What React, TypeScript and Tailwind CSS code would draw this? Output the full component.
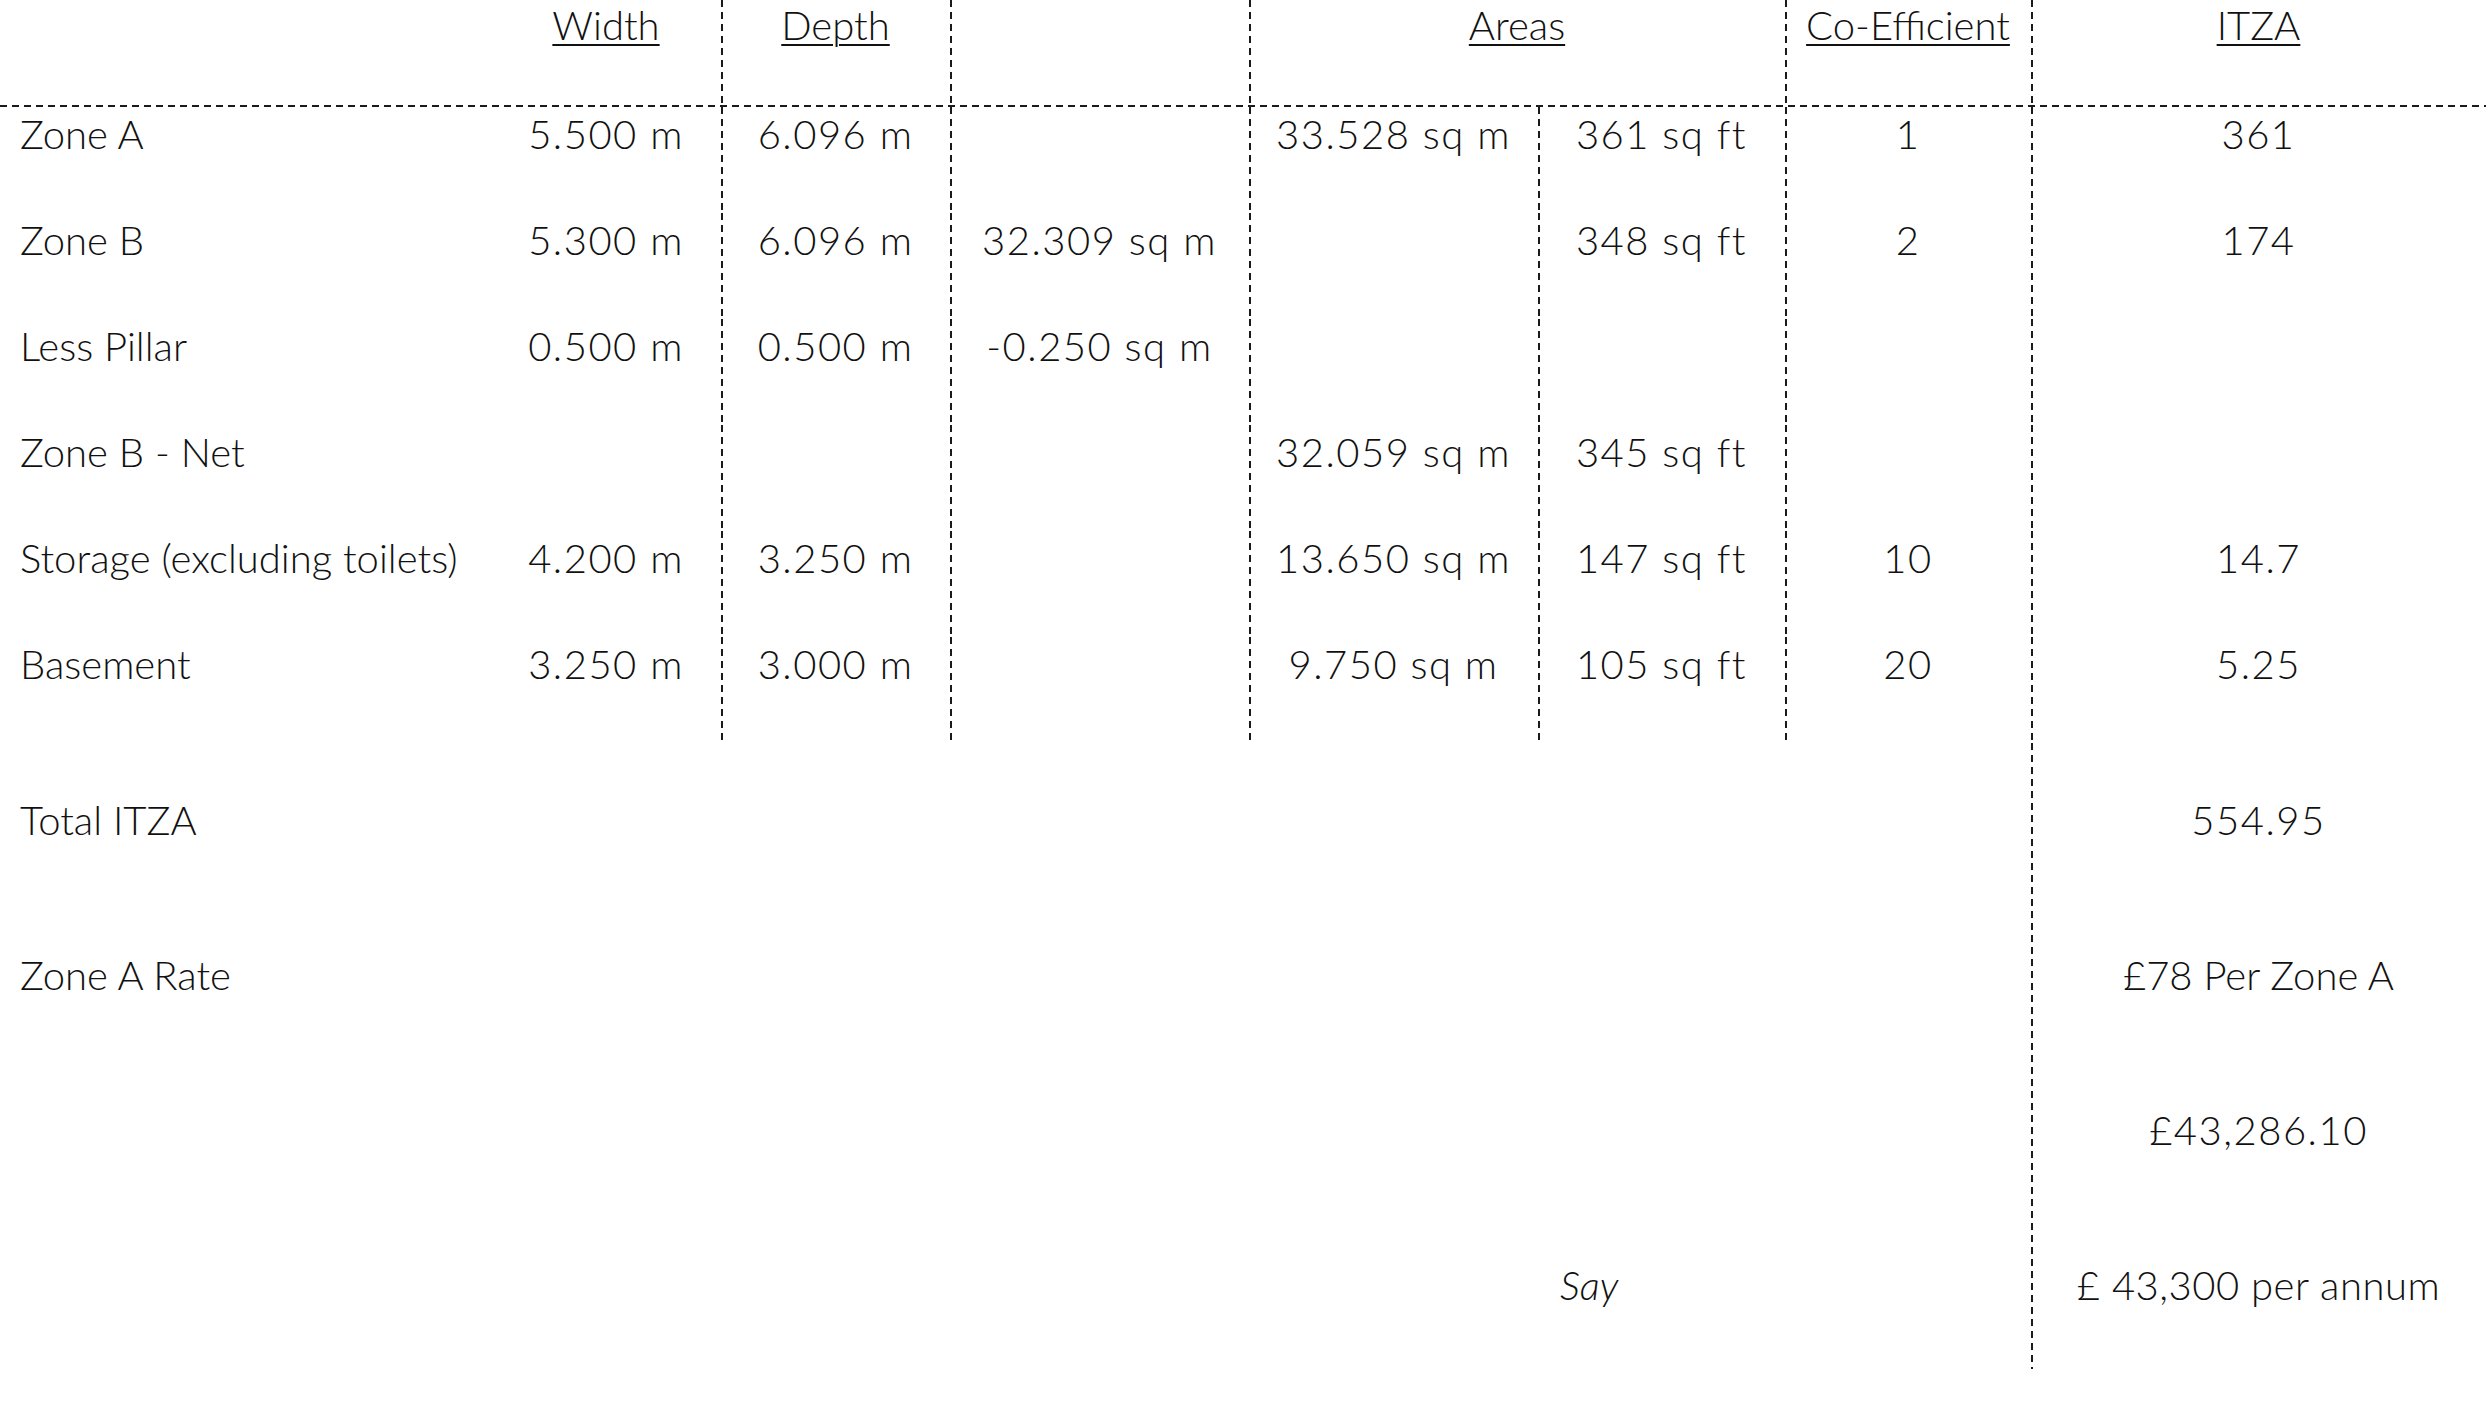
import clsx from "clsx";

type Row = {
  label: string;
  values: string[]; // width, depth, area, area sq m, sq ft, co-efficient, itza
};

const rows: Row[] = [
  { label: "Zone A", values: ["5.500 m", "6.096 m", "", "33.528 sq m", "361 sq ft", "1", "361"] },
  { label: "Zone B", values: ["5.300 m", "6.096 m", "32.309 sq m", "", "348 sq ft", "2", "174"] },
  { label: "Less Pillar", values: ["0.500 m", "0.500 m", "-0.250 sq m", "", "", "", ""] },
  { label: "Zone B - Net", values: ["", "", "", "32.059 sq m", "345 sq ft", "", ""] },
  { label: "Storage (excluding toilets)", values: ["4.200 m", "3.250 m", "", "13.650 sq m", "147 sq ft", "10", "14.7"] },
  { label: "Basement", values: ["3.250 m", "3.000 m", "", "9.750 sq m", "105 sq ft", "20", "5.25"] },
];

// which value columns carry a dashed divider on their left
const dividers = [false, true, true, true, true, true, true];

const grid = "grid grid-cols-[491px_230px_229px_299px_289px_247px_246px_1fr]";
// dashed vertical rule drawn as a background strip on the left edge
const vdash =
  "bg-[image:repeating-linear-gradient(to_bottom,#1a1a1a_0_7px,transparent_7px_12px)] bg-[length:2px_100%] bg-left bg-no-repeat";
const hdash =
  "bg-[image:repeating-linear-gradient(to_right,#1a1a1a_0_7px,transparent_7px_12px)]";

function Head({ children, line, className }: { children?: string; line?: boolean; className?: string }) {
  return (
    <div className={clsx("flex h-[105px] justify-center", line && vdash, className)}>
      {children && <span className="underline decoration-2 underline-offset-[4px]">{children}</span>}
    </div>
  );
}

export default function App() {
  return (
    <main className="min-h-screen w-[2486px] bg-white font-['Lato','Liberation_Sans',sans-serif] text-[40px] font-light leading-[50px] text-[#111]">
      {/* table */}
      <div className={grid}>
        <Head />
        <Head>Width</Head>
        <Head line>Depth</Head>
        <Head line />
        <Head line className="col-span-2">Areas</Head>
        <Head line>Co-Efficient</Head>
        <Head line>ITZA</Head>

        <div className={clsx("col-span-8 h-[2px]", hdash)} />

        {rows.map((r) => (
          <div key={r.label} className="contents">
            <div className="h-[106px] pl-5 pt-[2px] whitespace-nowrap">{r.label}</div>
            {r.values.map((v, i) => (
              <div
                key={i}
                className={clsx(
                  "flex h-[106px] justify-center pt-[2px] tracking-[1.5px] whitespace-nowrap",
                  dividers[i] && vdash
                )}
              >
                {v}
              </div>
            ))}
          </div>
        ))}
      </div>

      {/* totals */}
      <div className="flex h-[626px]">
        <div className="flex w-[2031px] flex-col pt-[52px]">
          <div className="h-[155px] pl-5">Total ITZA</div>
          <div className="h-[155px] pl-5">Zone A Rate</div>
          <div className="h-[155px]" />
          <div className="grid grid-cols-[1538px_1fr]">
            <div />
            <div className="pl-[22px] italic">Say</div>
          </div>
        </div>
        <div className={clsx("flex flex-1 flex-col items-center pt-[52px] tracking-[1.5px]", vdash)}>
          <div className="h-[155px]">554.95</div>
          <div className="h-[155px] tracking-normal">£78 Per Zone A</div>
          <div className="h-[155px]">£43,286.10</div>
          <div className="whitespace-nowrap tracking-[0.5px]">£ 43,300 per annum</div>
        </div>
      </div>
    </main>
  );
}
